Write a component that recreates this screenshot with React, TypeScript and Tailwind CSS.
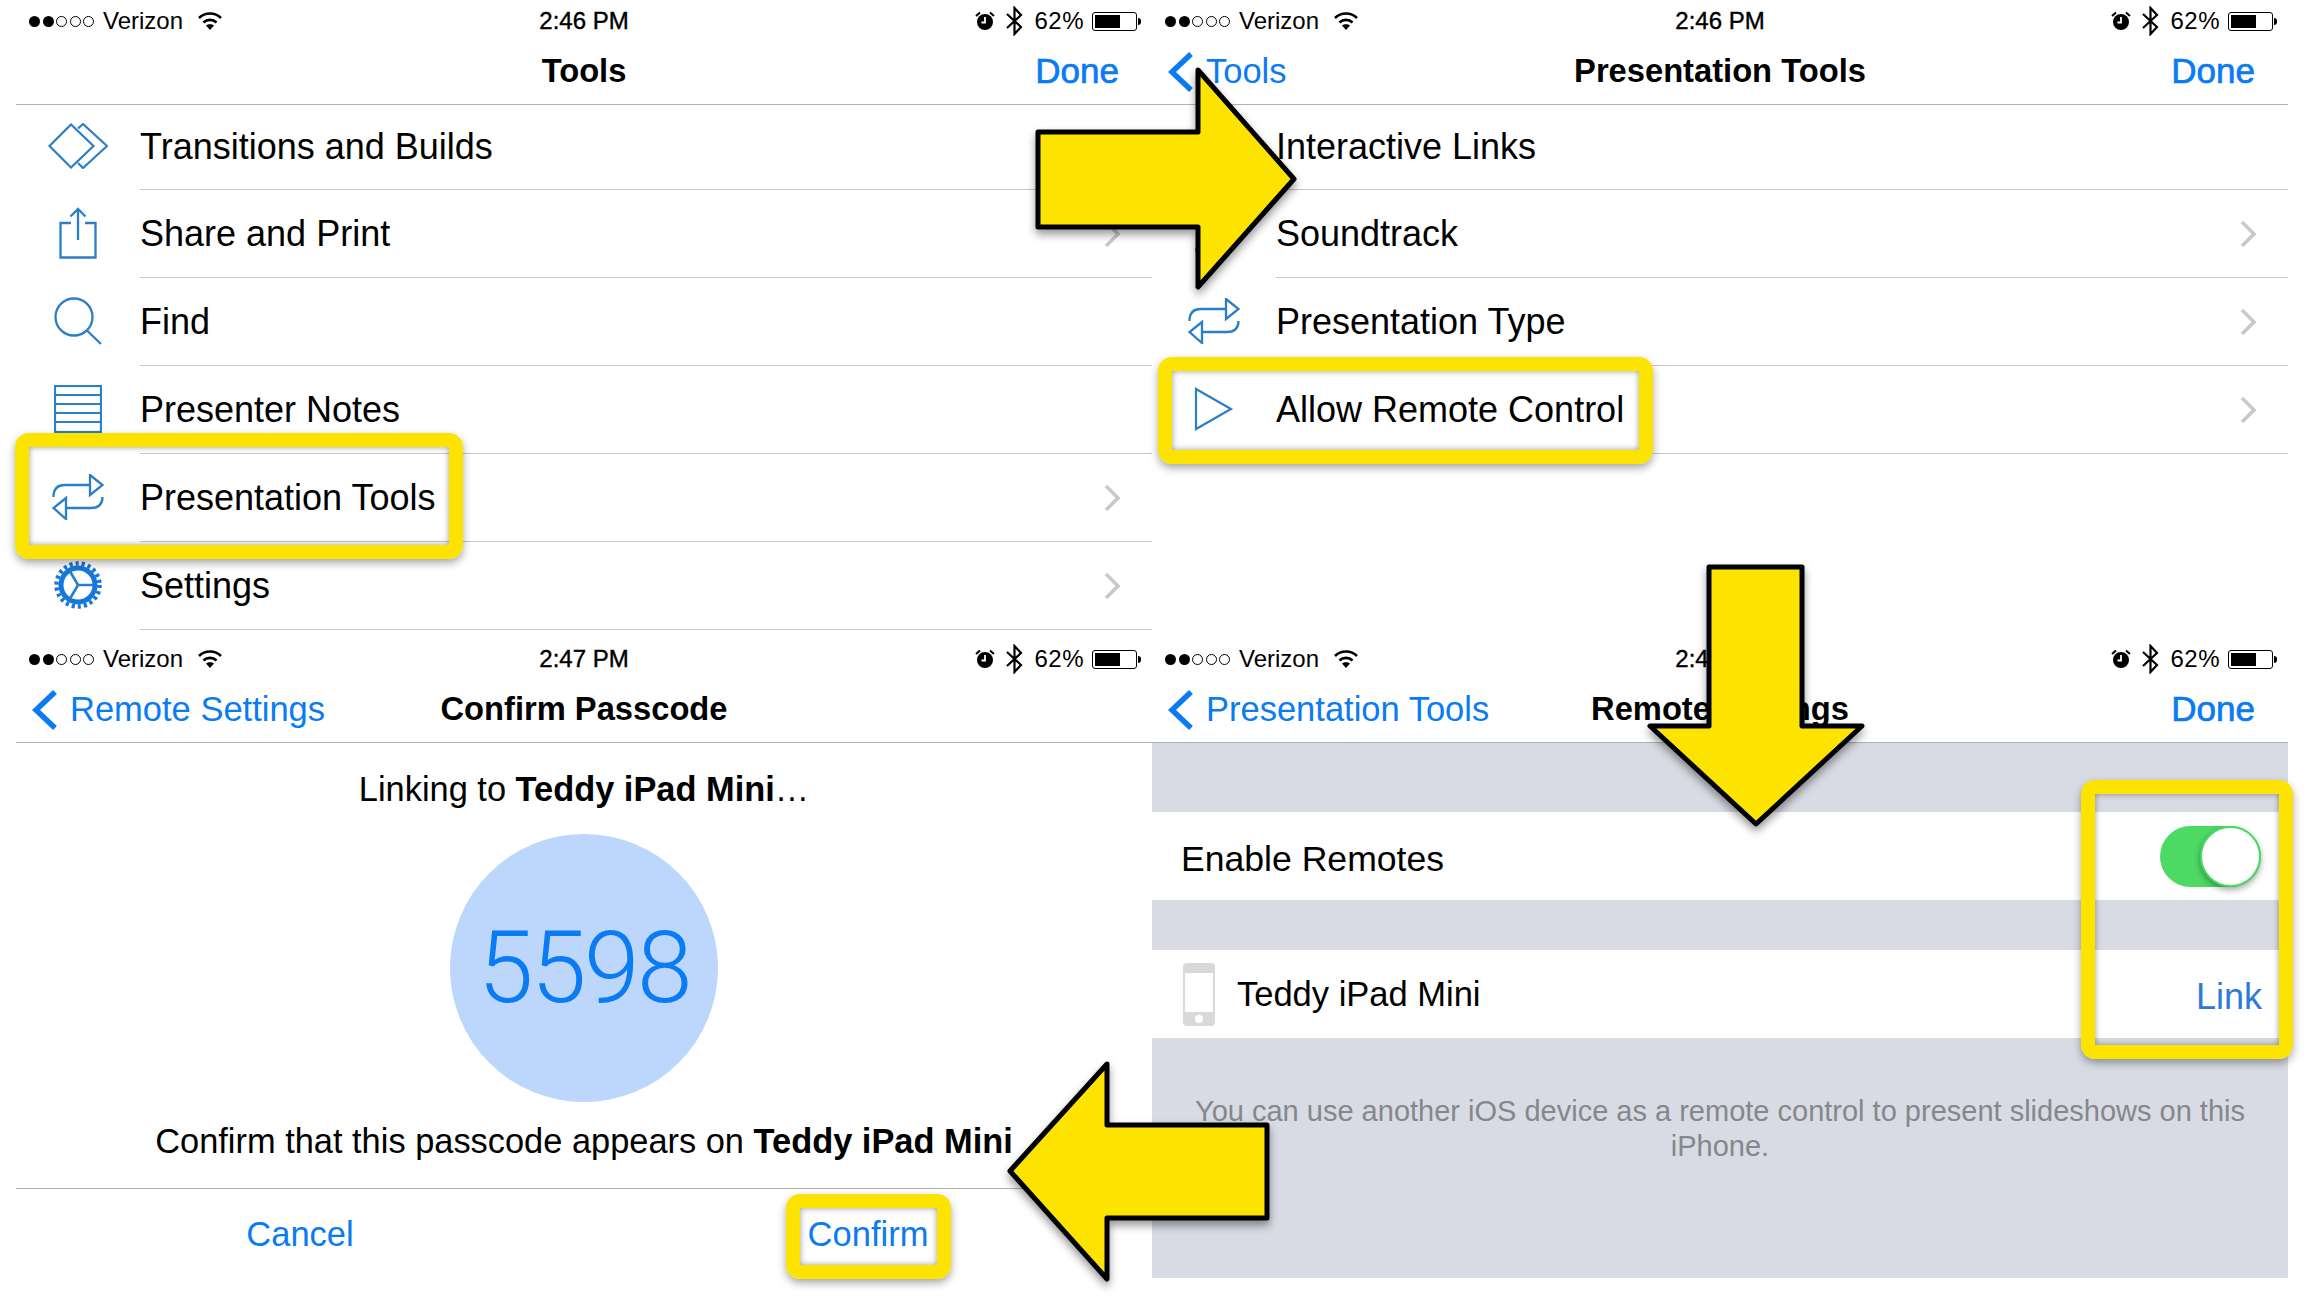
import { ReactNode } from "react";

const BLUE = "#0a7bf2";
const ICON = "#2a7fc8";
const YELLOW = "#fce300";

const Signal = () => (
  <div className="flex items-center gap-[2.5px]">
    <div className="h-[11px] w-[11px] rounded-full bg-black" />
    <div className="h-[11px] w-[11px] rounded-full bg-black" />
    <div className="h-[11px] w-[11px] rounded-full border border-black" />
    <div className="h-[11px] w-[11px] rounded-full border border-black" />
    <div className="h-[11px] w-[11px] rounded-full border border-black" />
  </div>
);

const Wifi = () => (
  <svg width="26" height="20" viewBox="0 0 26 20" fill="none" stroke="#000" strokeWidth="2.6">
    <path d="M2 7 C8 1 18 1 24 7" />
    <path d="M6.5 11.5 C10 8 16 8 19.5 11.5" />
    <path d="M13 19 L9 14.5 C11 12.7 15 12.7 17 14.5 Z" fill="#000" stroke="none" />
  </svg>
);

const Alarm = () => (
  <svg width="20" height="20" viewBox="0 0 20 20">
    <circle cx="10" cy="11" r="8" fill="#000" />
    <path d="M10 6 V11.5 H6.5" stroke="#fff" strokeWidth="1.8" fill="none" />
    <path d="M1 5 L5 1.5 M19 5 L15 1.5" stroke="#000" strokeWidth="2" />
  </svg>
);

const Bluetooth = () => (
  <svg width="17" height="30" viewBox="0 0 17 30" fill="none" stroke="#000" strokeWidth="2.2">
    <path d="M1 8 L15 21 L8.5 28 V2 L15 9 L1 22" />
  </svg>
);

const Battery = () => (
  <div className="flex items-center">
    <div className="flex h-[19px] w-[45px] rounded-[3px] border border-black p-[2px]">
      <div className="h-full w-[25px] bg-black" />
    </div>
    <div className="ml-[1px] h-[7px] w-[3px] rounded-r-full bg-black" />
  </div>
);

const StatusBar = ({ time }: { time: string }) => (
  <div className="relative flex h-[42px] items-center justify-between pl-[13px] pr-[11px] text-[24px] text-black">
    <div className="flex items-center gap-[9px]">
      <Signal />
      <span>Verizon</span>
      <div className="ml-[5px]">
        <Wifi />
      </div>
    </div>
    <div className="absolute inset-x-0 text-center [-webkit-text-stroke:0.4px_#000]">{time}</div>
    <div className="flex items-center">
      <Alarm />
      <div className="ml-[11px]">
        <Bluetooth />
      </div>
      <span className="ml-[11px] tracking-[0.5px]">62%</span>
      <div className="ml-[8px]">
        <Battery />
      </div>
    </div>
  </div>
);

const BackChevron = () => (
  <svg width="26" height="40" viewBox="0 0 26 40" fill="none" stroke={BLUE} strokeWidth="5.5">
    <path d="M23 2 L4 20 L23 38" />
  </svg>
);

const NavBar = ({ title, back, done }: { title: string; back?: string; done?: boolean }) => (
  <div className="relative flex h-[63px] items-center justify-between border-b border-[#b2b2b2] pb-[3px] pl-[16px] pr-[33px]">
    <div className="flex items-center gap-[12px] text-[34.5px] text-[#0a7bf2]">
      {back && <BackChevron />}
      {back && <span>{back}</span>}
    </div>
    <div className="absolute inset-x-0 pb-[2px] text-center text-[32.7px] font-bold text-black">{title}</div>
    {done && <span className="text-[35px] text-[#0a7bf2] [-webkit-text-stroke:0.7px_#0a7bf2]">Done</span>}
  </div>
);

const Chevron = () => (
  <svg width="17" height="28" viewBox="0 0 17 28" fill="none" stroke="#c7c7cc" strokeWidth="3.5">
    <path d="M2 2 L14 14 L2 26" />
  </svg>
);

const Row = ({ icon, label, chevron, first }: { icon?: ReactNode; label: string; chevron?: boolean; first?: boolean }) => (
  <div className={first ? "flex h-[85px]" : "flex h-[88px]"}>
    <div className="flex w-[124px] items-center justify-center pb-[3px]">{icon}</div>
    <div className="flex flex-1 items-center justify-between border-b border-[#c8c8cc] pr-[31px] text-[36px] text-black">
      <span>{label}</span>
      {chevron && <Chevron />}
    </div>
  </div>
);

const DiamondsIcon = () => (
  <svg width="60" height="46" viewBox="0 0 60 46" fill="none" stroke={ICON} strokeWidth="2.2">
    <path d="M1.5 23 L23 1.5 L45.5 23 L23 44.5 Z" />
    <path d="M30 5.5 L35 1 L59 23 L35 45 L30 40" />
  </svg>
);

const ShareIcon = () => (
  <svg width="38" height="52" viewBox="0 0 38 52" fill="none" stroke={ICON} strokeWidth="2.3">
    <path d="M12 16 H1.5 V50.5 H36.5 V16 H26" />
    <path d="M19 33 V2 M11.5 9.5 L19 2 L26.5 9.5" />
  </svg>
);

const SearchIcon = () => (
  <svg width="48" height="48" viewBox="0 0 48 48" fill="none" stroke={ICON} strokeWidth="2.3">
    <circle cx="20" cy="20" r="18.5" />
    <path d="M33 33.5 L47 47" />
  </svg>
);

const NotesIcon = () => (
  <svg width="48" height="48" viewBox="0 0 48 48" fill="none" stroke={ICON} strokeWidth="2.2">
    <rect x="1" y="1" width="46" height="46" />
    <path d="M1 10 H47 M1 19 H47 M1 28 H47 M1 37 H47" />
  </svg>
);

const SwapIcon = () => (
  <svg width="52" height="46" viewBox="0 0 52 46" fill="none" stroke={ICON} strokeWidth="2.3">
    <path d="M1.5 23 C1.5 15 5 11 13 11 H38" />
    <path d="M38 1 L50.5 11 L38 21 Z" />
    <path d="M50.5 23 C50.5 30 47 34 39 34 H14" />
    <path d="M14 24 L1.5 34 L14 45 Z" />
  </svg>
);

const GearIcon = () => (
  <svg width="48" height="48" viewBox="0 0 48 48" fill="none" stroke="#1577dc">
    <circle cx="24" cy="24" r="17" strokeWidth="5" />
    <circle cx="24" cy="24" r="21.5" strokeWidth="4.5" strokeDasharray="3.07 3.07" />
    <path d="M24 24 L40 24 M24 24 L15.5 9.5 M24 24 L15.5 38.5" strokeWidth="2.6" stroke="#2a7fc8" />
  </svg>
);

const NoteIcon = () => (
  <svg width="40" height="50" viewBox="0 0 40 50" fill={ICON}>
    <ellipse cx="8" cy="42" rx="7" ry="6" />
    <rect x="13" y="4" width="2" height="38" />
  </svg>
);

const PlayIcon = () => (
  <svg width="40" height="44" viewBox="0 0 40 44" fill="none" stroke={ICON} strokeWidth="2.2">
    <path d="M2 2 L37 22 L2 42 Z" />
  </svg>
);

const PhoneIcon = () => (
  <svg width="32" height="63" viewBox="0 0 32 63">
    <rect width="32" height="63" rx="4" fill="#d9d9d9" />
    <rect x="2" y="10" width="28" height="39" fill="#fff" />
    <circle cx="16" cy="56" r="4" fill="#fff" />
  </svg>
);

const ToolsPanel = () => (
  <div>
    <StatusBar time="2:46 PM" />
    <NavBar title="Tools" done />
    <Row first icon={<DiamondsIcon />} label="Transitions and Builds" />
    <Row icon={<ShareIcon />} label="Share and Print" chevron />
    <Row icon={<SearchIcon />} label="Find" />
    <Row icon={<NotesIcon />} label="Presenter Notes" />
    <Row icon={<SwapIcon />} label="Presentation Tools" chevron />
    <Row icon={<GearIcon />} label="Settings" chevron />
  </div>
);

const PresentationPanel = () => (
  <div>
    <StatusBar time="2:46 PM" />
    <NavBar title="Presentation Tools" back="Tools" done />
    <Row first label="Interactive Links" />
    <Row icon={<NoteIcon />} label="Soundtrack" chevron />
    <Row icon={<SwapIcon />} label="Presentation Type" chevron />
    <Row icon={<PlayIcon />} label="Allow Remote Control" chevron />
  </div>
);

const ConfirmPanel = () => (
  <div>
    <StatusBar time="2:47 PM" />
    <NavBar title="Confirm Passcode" back="Remote Settings" />
    <div className="flex h-[446px] flex-col items-center border-b border-[#b2b2b2] text-[34.4px] text-black">
      <div className="mt-[21px]">
        Linking to <b>Teddy iPad Mini</b>…
      </div>
      <div className="mt-[18px] flex h-[268px] w-[268px] items-center justify-center rounded-full bg-[#bcd7fb] font-['Roboto'] text-[100px] font-light tracking-[-2.5px] text-[#0a7bf2]">
        5598
      </div>
      <div className="mt-[14px]">
        Confirm that this passcode appears on <b>Teddy iPad Mini</b>
      </div>
    </div>
    <div className="flex h-[88px] pt-[3px] text-[34.5px] text-[#0a7bf2]">
      <div className="flex flex-1 items-center justify-center">Cancel</div>
      <div className="flex flex-1 items-center justify-center">Confirm</div>
    </div>
  </div>
);

const RemotePanel = () => (
  <div>
    <StatusBar time="2:47 PM" />
    <NavBar title="Remote Settings" back="Presentation Tools" done />
    <div className="flex h-[535px] flex-col bg-[#d8dbe3]">
      <div className="mt-[69px] flex h-[88px] items-center justify-between bg-white pl-[29px] pr-[27px] text-[35.6px] text-black">
        <span className="pt-[8px]">Enable Remotes</span>
        <div className="flex h-[61px] w-[101px] justify-end rounded-full bg-[#4cd964]">
          <div className="h-[61px] w-[61px] rounded-full border-2 border-[#4cd964] bg-white shadow-[0_3px_6px_rgba(0,0,0,0.35)]" />
        </div>
      </div>
      <div className="mt-[50px] flex h-[88px] items-center justify-between bg-white pl-[31px] pr-[26px] text-[34.5px] text-black">
        <div className="flex items-center gap-[22px]">
          <PhoneIcon />
          <span className="pt-[2px]">Teddy iPad Mini</span>
        </div>
        <span className="pt-[6px] text-[36px] text-[#2f7ad6]">Link</span>
      </div>
      <div className="mt-[56px] px-[20px] text-center text-[29px] leading-[35px] text-[#85878c]">
        You can use another iOS device as a remote control to present slideshows on this iPhone.
      </div>
    </div>
  </div>
);

const Highlight = ({ className }: { className: string }) => (
  <div className={`absolute rounded-[14px] border-[14px] border-[#fce300] shadow-[0_4px_8px_rgba(0,0,0,0.35),inset_0_0_6px_rgba(0,0,0,0.4)] ${className}`} />
);

const Arrow = ({ className, viewBox, points }: { className: string; viewBox: string; points: string }) => (
  <svg className={`absolute drop-shadow-[0_5px_4px_rgba(0,0,0,0.4)] ${className}`} viewBox={viewBox}>
    <polygon points={points} fill={YELLOW} stroke="#000" strokeWidth="5" strokeLinejoin="round" />
  </svg>
);

export default function App() {
  return (
    <div className="relative h-[1299px] w-[2309px] overflow-hidden bg-white font-['Liberation_Sans',sans-serif]">
      <div className="grid grid-cols-[1136px_1136px] grid-rows-[638px_661px] pl-[16px]">
        <ToolsPanel />
        <PresentationPanel />
        <ConfirmPanel />
        <RemotePanel />
      </div>

      <Highlight className="left-[15px] top-[433px] h-[126px] w-[448px]" />
      <Highlight className="left-[1158px] top-[357px] h-[107px] w-[495px]" />
      <Highlight className="left-[2081px] top-[780px] h-[279px] w-[212px]" />
      <Highlight className="left-[786px] top-[1194px] h-[85px] w-[165px]" />

      <Arrow
        className="left-[1030px] top-[60px] h-[240px] w-[280px]"
        viewBox="1030 60 280 240"
        points="1038,132 1198,132 1198,70 1294,179 1198,287 1198,227 1038,227"
      />
      <Arrow
        className="left-[1640px] top-[560px] h-[280px] w-[230px]"
        viewBox="1640 560 230 280"
        points="1709,567 1802,567 1802,726 1862,726 1756,824 1650,726 1709,726"
      />
      <Arrow
        className="left-[1000px] top-[1055px] h-[235px] w-[280px]"
        viewBox="1000 1055 280 235"
        points="1267,1125 1107,1125 1107,1064 1010,1171 1107,1279 1107,1218 1267,1218"
      />
    </div>
  );
}
